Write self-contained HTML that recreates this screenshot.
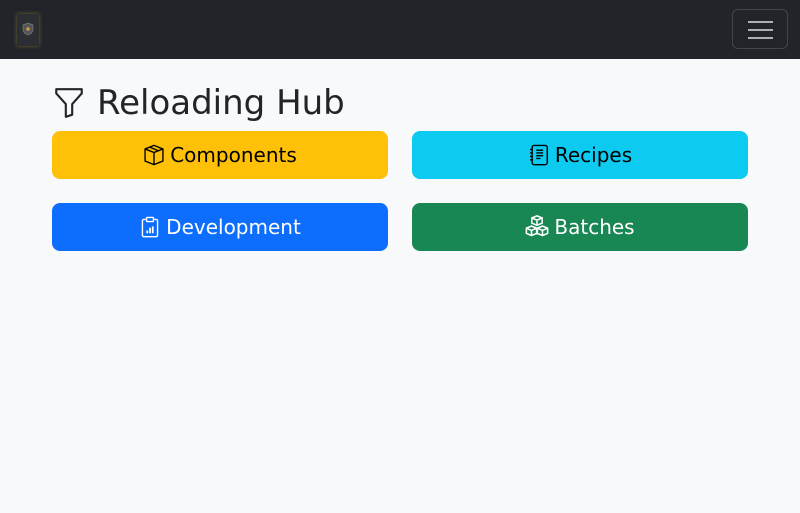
<!DOCTYPE html>
<html><head><style>
*{box-sizing:border-box;margin:0;padding:0}
body{width:800px;height:513px;background:#f8f9fa;font-family:"DejaVu Sans","Liberation Sans",sans-serif;color:#212529;overflow:hidden}
.nav{height:59px;background:#212529;position:relative}
.logo{position:absolute;left:17px;top:14px;width:22px;height:32px;background:#2b2f33;box-shadow:0 0 4px rgba(200,160,60,.5)}
.tog{position:absolute;left:732px;top:9px;width:56px;height:40px;border:1px solid rgba(255,255,255,.15);border-radius:6px}
.tog i{position:absolute;left:15px;width:25px;height:2px;background:#aeb0b2}
h1{position:absolute;left:52px;top:82px;font-weight:400;font-size:34px;line-height:42px;display:flex;align-items:center;gap:11px}
.btn{position:absolute;width:336px;height:48px;border-radius:8px;font-size:20px;display:flex;align-items:center;justify-content:center;gap:5px}
svg{display:block}
</style></head><body>
<div class="nav"><div class="logo"><svg width="22" height="32"><path d="M11 9l5 2v4c0 3-2 5-5 6-3-1-5-3-5-6v-4z" fill="#555" stroke="#888" stroke-width=".6"/><circle cx="11" cy="15" r="1.8" fill="#c9a040"/></svg></div>
<div class="tog"><i style="top:11px"></i><i style="top:19px"></i><i style="top:27px"></i></div></div>
<h1><svg width="34" height="34" viewBox="0 0 16 16" fill="#212529"><path d="M1.5 1.5A.5.5 0 0 1 2 1h12a.5.5 0 0 1 .5.5v2a.5.5 0 0 1-.128.334L10 8.692V13.5a.5.5 0 0 1-.342.474l-3 1A.5.5 0 0 1 6 14.5V8.692L1.628 3.834A.5.5 0 0 1 1.5 3.5zm1 .5v1.308l4.372 4.858A.5.5 0 0 1 7 8.5v5.306l2-.666V8.5a.5.5 0 0 1 .128-.334L13.5 3.308V2z"/></svg>Reloading Hub</h1>
<div class="btn" style="left:52px;top:131px;background:#ffc107;color:#000"><svg width="22" height="22" viewBox="0 0 16 16" fill="none" stroke="#000" stroke-width="1"><path d="M8 1l6.5 2.6v8.8L8 15 1.5 12.4V3.6z M1.5 3.6L8 6.2l6.5-2.6 M8 6.2V15 M4.8 2.3l6.5 2.6"/></svg>Components</div>
<div class="btn" style="left:412px;top:131px;background:#0dcaf0;color:#000"><svg width="22" height="22" viewBox="0 0 16 16" fill="none" stroke="#000" stroke-width="1"><rect x="3" y="1" width="11" height="14" rx="1.5"/><path d="M1.5 4h2M1.5 6.5h2M1.5 9h2M1.5 11.5h2M6 4.5h5M6 6.5h5M6 8.5h5M6 10.5h3"/></svg>Recipes</div>
<div class="btn" style="left:52px;top:203px;background:#0d6efd;color:#fff"><svg width="22" height="22" viewBox="0 0 16 16" fill="none" stroke="#fff" stroke-width="1"><path d="M5 2.5H3.5a1 1 0 0 0-1 1v10.5a1 1 0 0 0 1 1h9a1 1 0 0 0 1-1V3.5a1 1 0 0 0-1-1H11"/><rect x="5.5" y="1" width="5" height="3" rx=".5"/><path d="M6 12.5v-2M8 12.5v-4M10 12.5v-5" stroke-width="1.3"/></svg>Development</div>
<div class="btn" style="left:412px;top:203px;background:#198754;color:#fff"><svg width="24" height="24" viewBox="1 1 14 14" fill="none" stroke="#fff" stroke-width=".9"><path d="M8 1.5l3 1.2v3L8 7 5 5.7v-3z M5 2.7L8 4l3-1.3 M8 4v3 M4.8 7.5l3 1.2v3l-3 1.3-3-1.3v-3z M1.8 8.7l3 1.3 3-1.3 M4.8 10v3 M11.2 7.5l3 1.2v3l-3 1.3-3-1.3v-3z M8.2 8.7l3 1.3 3-1.3 M11.2 10v3"/></svg>Batches</div>
</body></html>
